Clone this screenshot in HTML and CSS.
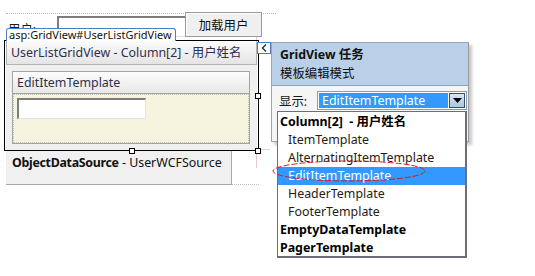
FILE: index.html
```html
<!DOCTYPE html>
<html>
	<head>
		<meta charset="UTF-8">
		<title>GridView 任务</title>
		<link rel="stylesheet" href="styles.css">
	</head>
	<body>
		<div id="surface">
			<!-- 设计器参考线 -->
			<div class="guide dotted top-guide"></div>
			<div class="guide dotted bottom-guide"></div>
			<div class="guide pink v-guide"></div>
			<div class="guide pink h-guide"></div>

			<div class="user-label">用户:</div>
			<div class="text-input top-input"></div>
			<div class="load-btn">加载用户</div>

			<div class="ods">
				<b>ObjectDataSource</b> - UserWCFSource
			</div>

			<!-- 选中的 GridView -->
			<div class="grid">
				<div class="grid-head">UserListGridView - Column[2] - 用户姓名</div>
				<div class="grid-body">
					<div class="tpl">
						<div class="tpl-head">EditItemTemplate</div>
						<div class="tpl-body">
							<div class="text-input"></div>
						</div>
					</div>
				</div>
			</div>
			<div class="tag">asp:GridView#UserListGridView</div>

			<span class="handle h-right"></span>
			<span class="handle h-bottom"></span>
			<span class="handle h-corner"></span>

			<!-- 智能标记 -->
			<div class="smart-btn">
				<svg width="7" height="8" viewBox="0 0 7 8"><path d="M5 0.5 L1.5 4 L5 7.5" fill="none" stroke="#1d2f44" stroke-width="1.4"/></svg>
			</div>

			<div class="tasks">
				<div class="tasks-head">
					<div class="tasks-title">GridView 任务</div>
					<div class="tasks-sub">模板编辑模式</div>
				</div>
				<div class="tasks-body">
					<span class="show-label">显示:</span>
					<div class="select">
						<span class="select-text">EditItemTemplate</span>
						<span class="select-arrow">
							<svg width="9" height="5" viewBox="0 0 9 5"><path d="M0 0 H9 L4.5 5 Z" fill="#000"/></svg>
						</span>
					</div>
				</div>
			</div>

			<ul class="dropdown">
				<li class="group">Column[2]&nbsp; - 用户姓名</li>
				<li>ItemTemplate</li>
				<li>AlternatingItemTemplate</li>
				<li class="active">EditItemTemplate</li>
				<li>HeaderTemplate</li>
				<li>FooterTemplate</li>
				<li class="group">EmptyDataTemplate</li>
				<li class="group">PagerTemplate</li>
			</ul>

			<!-- 红色圈注 -->
			<svg class="mark" width="158" height="24" viewBox="0 0 158 24">
				<ellipse cx="78" cy="11" rx="76" ry="10" fill="none" stroke="#e3141a" stroke-width="1" stroke-dasharray="6 2"/>
			</svg>
		</div>
	</body>
</html>
```

FILE: styles.css
```css
*{
	margin: 0;
	padding: 0;
	box-sizing: border-box;
}
ul,li{
	list-style: none;
}
body{
	background: #fff;
	font-family: "Noto Sans", "Noto Sans CJK SC", sans-serif;
	font-size: 12.4px;
	color: #1a1a1a;
}
#surface{
	width: 535px;
	height: 276px;
	position: relative;
	overflow: hidden;
}
.guide{
	position: absolute;
}
.dotted{
	height: 0;
	border-top: 1px dotted #bdbdbd;
}
.top-guide{
	left: 6px;
	top: 13px;
	width: 270px;
}
.bottom-guide{
	left: 231px;
	top: 184px;
	width: 28px;
}
.pink{
	background: #e6cccc;
}
.v-guide{
	left: 256px;
	top: 28px;
	width: 1px;
	height: 140px;
}
.h-guide{
	left: 4px;
	top: 149px;
	width: 266px;
	height: 1px;
}
.user-label{
	position: absolute;
	left: 8px;
	top: 22px;
	font-size: 12.4px;
	line-height: 16px;
}
.text-input{
	width: 129px;
	height: 21px;
	background: #fff;
	border: 1px solid #e3e3e3;
	border-top: 2px solid #7d7d7d;
	border-left: 2px solid #7d7d7d;
}
.top-input{
	position: absolute;
	left: 57px;
	top: 16px;
	height: 21px;
}
.load-btn{
	position: absolute;
	left: 185px;
	top: 12px;
	width: 77px;
	height: 25px;
	background: #f0f0f0;
	border: 1px solid #9a9a9a;
	box-shadow: inset 1px 1px 0 #fff;
	font-size: 12.4px;
	display: flex;
	align-items: center;
	justify-content: center;
	color: #111;
}
.ods{
	position: absolute;
	left: 6px;
	top: 151px;
	width: 226px;
	height: 34px;
	background: #f0f0f0;
	border-right: 1px solid #a9a9a9;
	border-bottom: 1px solid #a9a9a9;
	padding: 3px 0 0 6px;
	font-size: 12.4px;
	color: #111;
	white-space: nowrap;
}
.ods b{
	font-weight: bold;
	letter-spacing: -0.3px;
}
.grid{
	position: absolute;
	left: 4px;
	top: 40px;
	width: 255px;
	height: 111px;
	border: 1px solid #000;
	padding: 0 1px 1px 1px;
	background: #fff;
}
.grid-head{
	height: 24px;
	background: linear-gradient(#fcfcfc, #e4e4e4);
	border: 1px solid #b4b4b4;
	border-top: none;
	color: #2f2f4f;
	padding: 2px 0 0 4px;
	white-space: nowrap;
}
.grid-body{
	height: 85px;
	background: #f0f0f0;
	padding: 6px;
}
.tpl{
	width: 238px;
	height: 73px;
	border: 1px solid #a3a3a3;
}
.tpl-head{
	height: 22px;
	background: linear-gradient(#fdfdfd, #e7e7e7);
	border-bottom: 1px solid #a3a3a3;
	color: #2f2f4f;
	padding: 2px 0 0 4px;
}
.tpl-body{
	height: 49px;
	background: #f5f4de;
	border: 1px dotted #c2c2b0;
	padding: 3px 0 0 3px;
}
.tag{
	position: absolute;
	left: 6px;
	top: 28px;
	height: 13px;
	padding: 0 3px 0 2px;
	background: #fff;
	border: 1px solid #4a7fc0;
	border-bottom: none;
	border-radius: 3px 3px 0 0;
	font-size: 11px;
	line-height: 12px;
	color: #111;
	white-space: nowrap;
}
.handle{
	position: absolute;
	width: 6px;
	height: 6px;
	background: #fff;
	border: 1px solid #000;
}
.h-right{
	left: 255px;
	top: 93px;
}
.h-bottom{
	left: 129px;
	top: 148px;
}
.h-corner{
	left: 255px;
	top: 148px;
}
.smart-btn{
	position: absolute;
	left: 257px;
	top: 42px;
	width: 14px;
	height: 12px;
	background: #fff;
	border: 1px solid #4a7fc0;
	display: flex;
	align-items: center;
	justify-content: center;
}
.tasks{
	position: absolute;
	left: 271px;
	top: 42px;
	width: 198px;
	height: 100px;
	border: 1px solid #98a6b8;
	border-right-color: #9a9a9a;
	box-shadow: 3px 3px 3px rgba(0,0,0,0.22);
	background: #f5f5f5;
}
.tasks-head{
	height: 43px;
	background: #b9d0e8;
	border-bottom: 1px solid #8ea4bc;
	padding: 3px 0 0 8px;
	color: #111;
}
.tasks-title{
	font-weight: bold;
	line-height: 18px;
}
.tasks-sub{
	line-height: 20px;
}
.tasks-body{
	display: flex;
	align-items: center;
	padding: 5px 0 0 7px;
}
.show-label{
	width: 38px;
	flex-shrink: 0;
	white-space: nowrap;
}
.select{
	width: 150px;
	height: 19px;
	border: 1px solid #8a9cb0;
	background: #fff;
	display: flex;
	padding: 1px;
	flex-shrink: 0;
}
.select-text{
	flex: 1;
	background: #3399ff;
	color: #fff;
	line-height: 15px;
	padding-left: 3px;
	white-space: nowrap;
}
.select-arrow{
	width: 16px;
	margin-left: 1px;
	background: linear-gradient(#d6e6f6, #a9c6e4);
	border: 1px solid #34506e;
	display: flex;
	align-items: center;
	justify-content: center;
}
.dropdown{
	position: absolute;
	left: 277px;
	top: 111px;
	width: 190px;
	height: 147px;
	background: #fff;
	border: 1px solid #6d6d7b;
	border-width: 1px 2px 2px 1px;
	padding-top: 1px;
}
.dropdown li{
	height: 18px;
	line-height: 18px;
	padding-left: 10px;
	color: #2a1a12;
	white-space: nowrap;
}
.dropdown li.group{
	padding-left: 2px;
	font-weight: bold;
	color: #000;
}
.dropdown li.active{
	background: #3399ff;
	color: #fff;
}
.mark{
	position: absolute;
	left: 271px;
	top: 160px;
}
```
